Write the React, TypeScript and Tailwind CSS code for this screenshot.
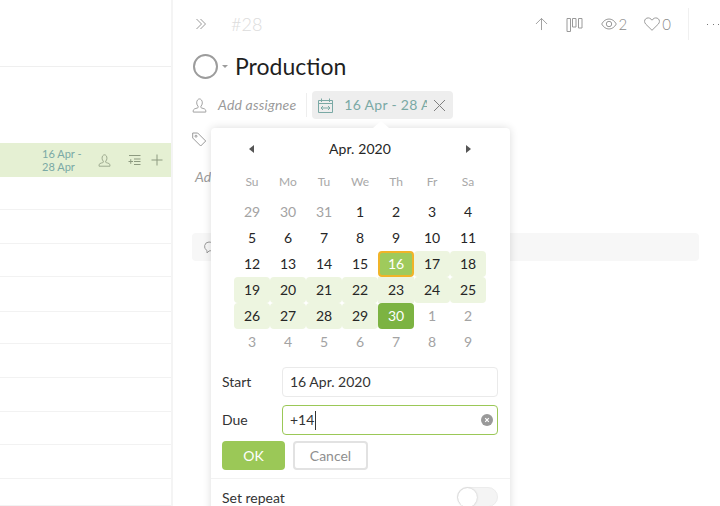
import { ReactNode } from 'react'

const rowHeights = ['h-[33px]', 'h-[34px]', 'h-[33px]', 'h-[35px]', 'h-[32px]', 'h-[34px]', 'h-[34px]', 'h-[33px]', 'h-[34px]', 'h-[27px]']

const iconStroke = '#9a9a9a'

function PersonIcon({ color = iconStroke, size = 16 }: { color?: string; size?: number }) {
  return (
    <svg width={size} height={size} viewBox="0 0 16 16" fill="none" stroke={color} strokeWidth="1">
      <path d="M5 5.2C5 2.900 6.200 1 8 1s3 1.900 3 4.200c0 1.600-.7 2.900-1.500 3.600v1.400c0 .6 4.500 1 5 2.500.3 1 .2 2.300.2 2.300H1.300s-.1-1.300.2-2.300c.5-1.500 5-1.900 5-2.500V8.800C5.700 8.100 5 6.800 5 5.200z" />
    </svg>
  )
}

type Day = { n: number; muted?: boolean; kind?: 'start' | 'end' | 'range' | 'mid' }

const weeks: Day[][] = [
  [{ n: 29, muted: true }, { n: 30, muted: true }, { n: 31, muted: true }, { n: 1 }, { n: 2 }, { n: 3 }, { n: 4 }],
  [{ n: 5 }, { n: 6 }, { n: 7 }, { n: 8 }, { n: 9 }, { n: 10 }, { n: 11 }],
  [{ n: 12 }, { n: 13 }, { n: 14 }, { n: 15 }, { n: 16, kind: 'start' }, { n: 17, kind: 'range' }, { n: 18, kind: 'range' }],
  [{ n: 19, kind: 'range' }, { n: 20, kind: 'range' }, { n: 21, kind: 'range' }, { n: 22, kind: 'range' }, { n: 23, kind: 'mid' }, { n: 24, kind: 'range' }, { n: 25, kind: 'range' }],
  [{ n: 26, kind: 'range' }, { n: 27, kind: 'range' }, { n: 28, kind: 'range' }, { n: 29, kind: 'range' }, { n: 30, kind: 'end' }, { n: 1, muted: true }, { n: 2, muted: true }],
  [{ n: 3, muted: true }, { n: 4, muted: true }, { n: 5, muted: true }, { n: 6, muted: true }, { n: 7, muted: true }, { n: 8, muted: true }, { n: 9, muted: true }],
]

function DayCell({ day }: { day: Day }) {
  let cls = day.muted ? 'text-[#a3a3a3]' : 'text-[#262626]'
  if (day.kind === 'start') cls = 'bg-[#9fca5c] border-2 border-[#f0b429] text-white rounded-[4px]'
  if (day.kind === 'end') cls = 'bg-[#7cb342] text-white rounded-[4px]'
  if (day.kind === 'range') cls = 'bg-[#edf5e0] text-[#262626] rounded-[4px]'
  if (day.kind === 'mid') cls = 'bg-[#edf5e0] text-[#262626]'
  return <div className={`h-[26px] flex items-center justify-center text-sm ${cls}`}>{day.n}</div>
}

function Label({ children }: { children: ReactNode }) {
  return <div className="w-[60px] text-sm text-[#333]">{children}</div>
}

function DatePopover() {
  return (
    <div className="absolute left-[38px] top-[128px] w-[299px] h-[400px] bg-white rounded-[4px] shadow-[0_0_8px_rgba(0,0,0,0.14)]">
      <div className="absolute left-[162px] top-[-7px] w-0 h-0 border-x-[8px] border-x-transparent border-b-[7px] border-b-white" />
      <div className="flex items-center justify-between h-[42px] pl-[38px] pr-[39px]">
        <span className="w-0 h-0 border-y-[4px] border-y-transparent border-r-[5px] border-r-[#555]" />
        <span className="text-sm text-[#262626] tracking-[0.1px]">Apr. 2020</span>
        <span className="w-0 h-0 border-y-[4px] border-y-transparent border-l-[5px] border-l-[#555]" />
      </div>
      <div className="px-[23px]">
        <div className="grid grid-cols-[repeat(7,36px)] h-[24px] items-center text-xs text-[#a8a8a8] text-center">
          {['Su', 'Mo', 'Tu', 'We', 'Th', 'Fr', 'Sa'].map((d) => (
            <div key={d}>{d}</div>
          ))}
        </div>
        <div className="grid grid-cols-[repeat(7,36px)] mt-[5px]">
          {weeks.flat().map((day, i) => (
            <DayCell key={i} day={day} />
          ))}
        </div>
      </div>
      <div className="pl-[11px] pr-[12px] mt-[12px]">
        <div className="flex items-center h-[30px]">
          <Label>Start</Label>
          <div className="w-[216px] h-[30px] border border-[#eaeaea] rounded-[4px] px-[7px] flex items-center text-sm text-[#333]">16 Apr. 2020</div>
        </div>
        <div className="flex items-center h-[30px] mt-[8px]">
          <Label>Due</Label>
          <div className="w-[216px] h-[30px] border border-[#9bc857] rounded-[4px] pl-[7px] pr-[4px] flex items-center justify-between text-sm text-[#333]">
            <span className="flex items-center">
              +14<span className="w-px h-[19px] bg-[#333] ml-[1px]" />
            </span>
            <svg width="12" height="12" viewBox="0 0 12 12">
              <circle cx="6" cy="6" r="6" fill="#999" />
              <path d="M4.200 4.200l3.600 3.600M7.800 4.200l-3.600 3.600" stroke="#fff" strokeWidth="1.200" />
            </svg>
          </div>
        </div>
        <div className="flex gap-[8px] mt-[6px]">
          <button className="w-[63px] h-[29px] bg-[#9bc857] rounded-[4px] text-sm text-white">OK</button>
          <button className="w-[75px] h-[29px] border-2 border-[#e2e2e2] rounded-[4px] text-sm text-[#8f8f8f]">Cancel</button>
        </div>
      </div>
      <div className="border-t border-[#f2f2f2] mt-[8px] pl-[11px] pr-[12px] pt-[8px] flex items-center justify-between">
        <span className="text-sm text-[#333] translate-y-px">Set repeat</span>
        <div className="w-[41px] h-[20px] rounded-full bg-[#f4f4f4] border border-[#ececec]">
          <div className="w-[19px] h-[19px] rounded-full bg-white shadow-[0_0_2px_rgba(0,0,0,0.25)]" />
        </div>
      </div>
    </div>
  )
}

function LeftPane() {
  return (
    <div className="w-[173px] shrink-0 h-full border-r-2 border-[#f4f4f4] overflow-hidden">
      <div className="h-[67px] border-b border-[#efefef]" />
      <div className="h-[76px]" />
      <div className="h-[34px] bg-[#e5f0d3] flex items-center">
        <div className="ml-[42px] w-[50px] text-[11px] leading-[13px] text-[#7aa9a5]">16 Apr - 28 Apr</div>
        <div className="ml-[6px]">
          <PersonIcon color="#8d9a80" size={13} />
        </div>
        <svg className="ml-[17px]" width="13" height="12" viewBox="0 0 13 12" fill="none" stroke="#8d9a80" strokeWidth="1">
          <path d="M1 1.500h11.500M6 5h6.500M6 7.500h6.500M6 10.500h6.500M.5 7.500h4.500M2.750 5.200v4.600" />
        </svg>
        <svg className="ml-[10px]" width="12" height="12" viewBox="0 0 12 12" fill="none" stroke="#8d9a80" strokeWidth="1">
          <path d="M6 .5v11M.5 6h11" />
        </svg>
      </div>
      {rowHeights.map((h, i) => (
        <div key={i} className={`${h} border-b border-[#f2f2f2]`} />
      ))}
    </div>
  )
}

function DetailPane() {
  return (
    <div className="relative flex-1 h-full pl-[19px] pr-[21px] overflow-hidden">
      <div className="flex items-center h-[48px]">
        <svg className="ml-[4px]" width="11" height="12" viewBox="0 0 11 12" fill="none" stroke="#9a9a9a" strokeWidth="1">
          <path d="M.5 1l5 5-5 5M4.500 1l5 5-5 5" />
        </svg>
        <span className="ml-[24px] text-lg font-light text-[#dcdcdc]">#28</span>
        <div className="ml-auto flex items-center">
          <svg className="ml-px" width="13" height="14" viewBox="0 0 14 14" fill="none" stroke="#9a9a9a" strokeWidth="1">
            <path d="M7 13.500V1M1 7l6-6 6 6" />
          </svg>
          <svg className="ml-[18px]" width="17" height="15" viewBox="0 0 17 15" fill="none" stroke="#9a9a9a" strokeWidth="1">
            <path d="M1 1.500h3.500v13H1zM6.500 1.500H10V10H6.500zM12.500 1.500H16V11h-3.500z" />
          </svg>
          <svg className="ml-[18px]" width="16" height="12" viewBox="0 0 16 12" fill="none" stroke="#9a9a9a" strokeWidth="1">
            <path d="M.7 6C2.500 2.800 5 1 8 1s5.500 1.800 7.300 5C13.500 9.200 11 11 8 11S2.500 9.200.7 6z" />
            <circle cx="8" cy="6" r="2.700" />
          </svg>
          <span className="ml-[2px] text-[15px] font-light text-[#8a8a8a]">2</span>
          <svg className="ml-[17px]" width="16" height="14" viewBox="0 0 16 14" fill="none" stroke="#9a9a9a" strokeWidth="1">
            <path d="M8 13.300L1.800 7.200C.2 5.500.2 3.200 1.600 1.900 3.100.500 5.500.6 7 2.100l1 1.100 1-1.100c1.500-1.500 3.900-1.600 5.400-.2 1.400 1.300 1.400 3.600-.2 5.300z" />
          </svg>
          <span className="ml-[2px] text-[15px] font-light text-[#8a8a8a]">0</span>
          <div className="ml-[17px] w-px h-[32px] bg-[#f0f0f0]" />
          <span className="ml-[18px] mr-[-20px] w-[12px] flex justify-between">
            <i className="w-px h-px bg-[#777]" />
            <i className="w-px h-px bg-[#777]" />
            <i className="w-px h-px bg-[#777]" />
          </span>
        </div>
      </div>
      <div className="flex items-center h-[34px] mt-px">
        <div className="w-[25px] h-[25px] ml-px rounded-full border-2 border-[#9c9c9c]" />
        <span className="ml-[4px] w-0 h-0 border-x-[3px] border-x-transparent border-t-[3px] border-t-[#9c9c9c]" />
        <span className="ml-[7px] text-[23px] text-[#1f1f1f]">Production</span>
      </div>
      <div className="flex items-center h-[28px] mt-[8px]">
        <PersonIcon size={15} />
        <span className="ml-[11px] text-sm italic text-[#9a9a9a] tracking-[0.2px]">Add assignee</span>
        <div className="ml-[10px] w-px h-[24px] bg-[#eeeeee]" />
        <div className="ml-[5px] w-[141px] h-[28px] bg-[#eeeeee] rounded-[4px] flex items-center pl-[6px]">
          <svg width="15" height="15" viewBox="0 0 15 15" fill="none" stroke="#7aa9a5" strokeWidth="1">
            <path d="M.5 2.500h14v12H.5zM.5 5.500h14M3.500.5v3.500M11.500.5v3.500M3 10h9M5 8l-2 2 2 2M10 8l2 2-2 2" />
          </svg>
          <span className="ml-[11px] w-[83px] overflow-hidden whitespace-nowrap text-sm text-[#7aa9a5] tracking-[0.3px]">16 Apr - 28 Apr</span>
          <svg className="ml-[6px]" width="13" height="13" viewBox="0 0 13 13" fill="none" stroke="#808080" strokeWidth="1">
            <path d="M1 1l11 11M12 1L1 12" />
          </svg>
        </div>
      </div>
      <div className="flex items-center h-[16px] mt-[12px]">
        <svg width="15" height="15" viewBox="0 0 15 15" fill="none" stroke="#9a9a9a" strokeWidth="1">
          <path d="M.7 1v5l8 8 5-5-8-8z" />
          <circle cx="4" cy="4.200" r="1" />
        </svg>
      </div>
      <div className="mt-[20px] ml-[3px] text-sm italic text-[#9a9a9a] h-[20px]">Add</div>
      <div className="mt-[46px] w-[507px] h-[28px] bg-[#f7f7f7] rounded-[4px] flex items-center pl-[11px]">
        <svg width="12" height="13" viewBox="0 0 12 13" fill="none" stroke="#9a9a9a" strokeWidth="1">
          <path d="M6 1a4.500 4.500 0 0 1 0 9l-2 2v-2.500A4.500 4.500 0 0 1 6 1z" />
        </svg>
      </div>
      <DatePopover />
    </div>
  )
}

export default function App() {
  return (
    <div className="w-[720px] h-[506px] bg-white flex overflow-hidden font-['Lato',sans-serif]">
      <LeftPane />
      <DetailPane />
    </div>
  )
}
